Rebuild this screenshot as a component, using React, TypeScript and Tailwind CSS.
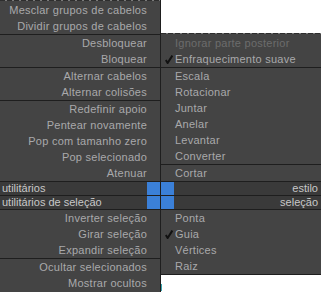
const Dash = () => (
  <div className="h-px bg-[repeating-linear-gradient(90deg,#2e2e2e_0_5px,#7a7a7a_5px_7px)]" />
);

const Sep = () => <div className="h-px bg-[#1e1e1e]" />;

const Check = () => (
  <svg width="8" height="9" viewBox="0 0 8 9" className="absolute left-[4px] top-[4px]">
    <path d="M0.8 5 L2.6 8 L7.4 0.5" fill="none" stroke="#111" strokeWidth="2" />
  </svg>
);

const LeftItem = ({ label }: { label: string }) => (
  <div className="h-4 flex items-center justify-end pr-[13px] text-[#a9a9ab] leading-none tracking-[0.25px]">{label}</div>
);

const RightItem = ({ label, checked, disabled }: { label: string; checked?: boolean; disabled?: boolean }) => (
  <div
    className={
      "relative h-4 flex items-center pl-[14px] leading-none tracking-[0.25px] " +
      (disabled ? "text-[#6c6c6c]" : "text-[#a9a9ab]")
    }
  >
    {checked && <Check />}
    {label}
  </div>
);

const LeftHeader = ({ label }: { label: string }) => (
  <div className="h-[13px] flex items-center bg-[#3a3a3a] text-[#c8c8c8] leading-none">
    <span className="flex-1 pl-[2px]">{label}</span>
    <div className="w-[13px] h-full bg-[#3b80d8]" />
  </div>
);

const RightHeader = ({ label }: { label: string }) => (
  <div className="h-[13px] flex items-center bg-[#3a3a3a] text-[#c8c8c8] leading-none">
    <div className="w-[13px] h-full bg-[#3b80d8]" />
    <span className="flex-1 text-right pr-[3px]">{label}</span>
  </div>
);

export default function App() {
  return (
    <div className="w-[321px] h-[292px] flex bg-white text-[11px] font-['Liberation_Sans',Arial,sans-serif] overflow-hidden">
      <div className="w-[161px] h-full flex flex-col bg-[#444444] border-r border-[#1e1e1e]">
        <Dash />
        <div className="h-px" />
        <LeftItem label="Mesclar grupos de cabelos" />
        <LeftItem label="Dividir grupos de cabelos" />
        <Sep />
        <LeftItem label="Desbloquear" />
        <LeftItem label="Bloquear" />
        <Sep />
        <LeftItem label="Alternar cabelos" />
        <LeftItem label="Alternar colisões" />
        <Sep />
        <LeftItem label="Redefinir apoio" />
        <LeftItem label="Pentear novamente" />
        <LeftItem label="Pop com tamanho zero" />
        <LeftItem label="Pop selecionado" />
        <LeftItem label="Atenuar" />
        <Sep />
        <LeftHeader label="utilitários" />
        <Sep />
        <LeftHeader label="utilitários de seleção" />
        <Sep />
        <LeftItem label="Inverter seleção" />
        <LeftItem label="Girar seleção" />
        <LeftItem label="Expandir seleção" />
        <Sep />
        <LeftItem label="Ocultar selecionados" />
        <LeftItem label="Mostrar ocultos" />
      </div>
      <div className="flex-1 flex flex-col">
        <div className="h-[33px]" />
        <div className="flex flex-col bg-[#444444] border-b border-[#1e1e1e]">
          <Dash />
          <div className="h-px" />
          <RightItem label="Ignorar parte posterior" disabled />
          <RightItem label="Enfraquecimento suave" checked />
          <Sep />
          <RightItem label="Escala" />
          <RightItem label="Rotacionar" />
          <RightItem label="Juntar" />
          <RightItem label="Anelar" />
          <RightItem label="Levantar" />
          <RightItem label="Converter" />
          <Sep />
          <RightItem label="Cortar" />
          <Sep />
          <RightHeader label="estilo" />
          <Sep />
          <RightHeader label="seleção" />
          <Sep />
          <RightItem label="Ponta" />
          <RightItem label="Guia" checked />
          <RightItem label="Vértices" />
          <RightItem label="Raiz" />
        </div>
        <div className="flex-1 flex items-end pb-px">
          <div className="w-px h-[7px] bg-[#3aa6b0]" />
        </div>
      </div>
    </div>
  );
}
